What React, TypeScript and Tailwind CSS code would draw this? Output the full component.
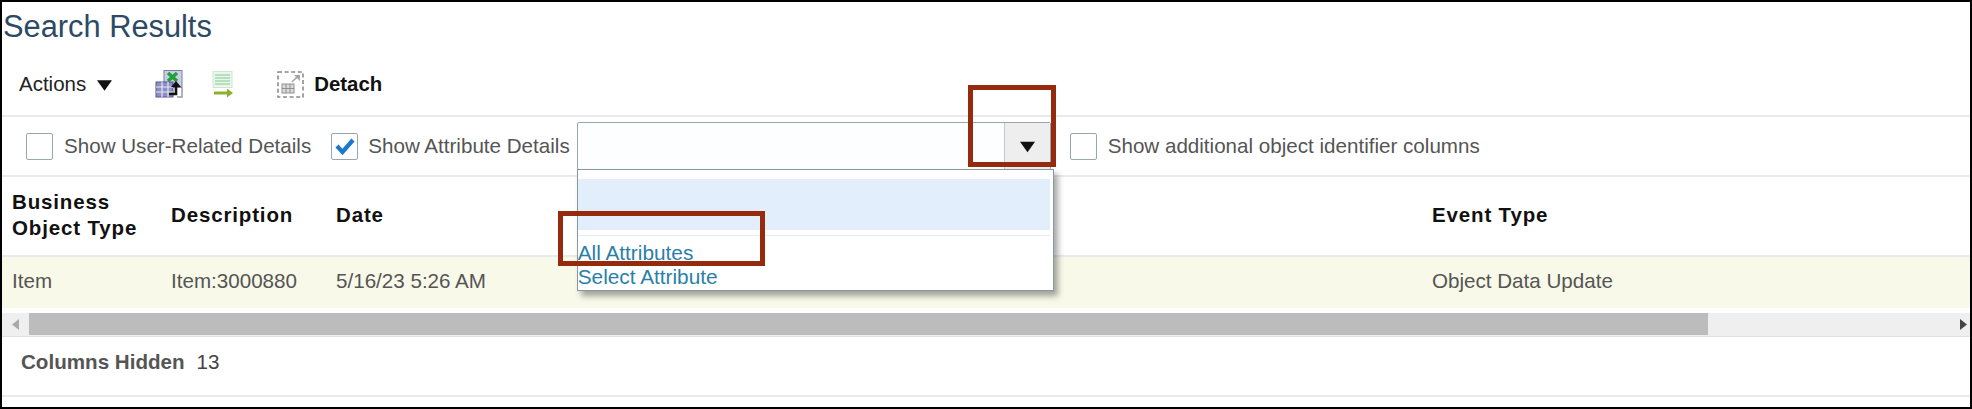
function ArrowDown({ className }: { className: string }) {
  return (
    <svg viewBox="0 0 14 10" className={className}>
      <path d="M0 0h14L7 10z" fill="#111" />
    </svg>
  );
}

function ExportIcon() {
  return (
    <svg viewBox="0 0 28 28" className="w-[28px] h-[28px]">
      <rect x="9" y="0.5" width="18" height="17" fill="#c9cfe2" stroke="#7a7fa8" />
      <path d="M13 3l9 8M22 3l-9 8" stroke="#23a03c" strokeWidth="3.5" />
      <rect x="1" y="12" width="17" height="15" fill="#8d8fc4" stroke="#54568f" />
      <path d="M1 17h17M1 22h17M7 12v15M13 12v15" stroke="#e6e7f4" strokeWidth="1.2" />
      <path d="M14 24h7v-8" fill="none" stroke="#111" strokeWidth="2.6" />
      <path d="M16 17l5-6 5 6z" fill="#111" />
      <path d="M27 18v9H22" fill="none" stroke="#9a9a9a" strokeWidth="1.5" />
    </svg>
  );
}

function ExportGreenIcon() {
  return (
    <svg viewBox="0 0 22 27" className="w-[22px] h-[27px]">
      <rect x="1" y="0.5" width="19" height="16" fill="#eaf6ec" stroke="#cfe6d3" />
      <path d="M3 4h15M3 7h15M3 10h15M3 13h15" stroke="#a4d8ae" strokeWidth="1.4" />
      <path d="M2 22h15" stroke="#8fb02e" strokeWidth="3" />
      <path d="M15 17.5l6 4.5-6 4.5z" fill="#8fb02e" />
    </svg>
  );
}

function DetachIcon() {
  return (
    <svg viewBox="0 0 27 27" className="w-[27px] h-[27px]">
      <rect x="1" y="1" width="25" height="25" fill="none" stroke="#8b8b8b" strokeWidth="1.6" strokeDasharray="4 2.6" />
      <rect x="5" y="13" width="12" height="9" fill="#dcdcdc" stroke="#8f8f8f" />
      <path d="M5 17.5h12M9 13v9M13 13v9" stroke="#8f8f8f" />
      <path d="M15 11l7-7" stroke="#a6a6a6" strokeWidth="1.6" />
      <path d="M17 4h6v6z" fill="#a6a6a6" />
    </svg>
  );
}

function Checkbox({ checked }: { checked?: boolean }) {
  return (
    <div className="w-[27px] h-[27px] shrink-0 rounded-[2px] border border-[#9aa6ae] bg-white flex items-center justify-center">
      {checked && (
        <svg viewBox="0 0 20 18" className="w-[20px] h-[18px]">
          <path d="M2 9l5.5 6L18 3" fill="none" stroke="#1b78d0" strokeWidth="4.2" />
        </svg>
      )}
    </div>
  );
}

export default function App() {
  return (
    <div className="relative w-[1972px] h-[409px] overflow-hidden border-2 border-black bg-white flex flex-col font-['Liberation_Sans',Arial,sans-serif]">
      {/* Title */}
      <div className="h-[51px] shrink-0 pl-px flex items-center">
        <h1 className="text-[30.8px] leading-none text-[#2c4a66]">Search Results</h1>
      </div>

      {/* Toolbar */}
      <div className="h-[64px] shrink-0 flex items-center pl-[17px] border-b-2 border-[#e8eaeb]">
        <span className="text-[20.5px] text-[#222]">Actions</span>
        <ArrowDown className="w-[15px] h-[11px] ml-[11px] mt-[3px]" />
        <div className="ml-[43px]">
          <ExportIcon />
        </div>
        <div className="ml-[29px]">
          <ExportGreenIcon />
        </div>
        <div className="ml-[43px]">
          <DetachIcon />
        </div>
        <span className="ml-[10px] text-[20.4px] font-bold text-[#111]">Detach</span>
      </div>

      {/* Filter row */}
      <div className="h-[60px] shrink-0 flex items-center pl-[24px] border-b-2 border-[#e8eaeb] text-[20.6px] text-[#555]">
        <Checkbox />
        <span className="ml-[11px]">Show User-Related Details</span>
        <div className="ml-[20px]">
          <Checkbox checked />
        </div>
        <span className="ml-[10px]">Show Attribute Details</span>
        <div className="relative ml-[7px] w-[474px] h-[48px] rounded-[2px] border border-[#9aa6ae] bg-[#fcfeff] flex justify-end">
          <div className="w-[46px] h-full border-l border-[#c4c9cc] bg-[#eeeeee] flex items-center justify-center">
            <ArrowDown className="w-[15px] h-[12px] mt-[2px]" />
          </div>
          {/* Dropdown list */}
          <div className="absolute z-10 left-[-1px] top-[46px] w-[477px] h-[122px] border border-[#8b979e] bg-white shadow-[4px_5px_6px_rgba(0,0,0,0.35)] text-[20.8px] leading-[24px] text-[#2a7fa8]">
            <div className="mt-[9px] mr-[3px] h-[51px] bg-[#e2eefb]" />
            <div className="mt-[5px] mr-[3px] border-t border-[#e3ecf0]" />
            <div className="mt-[5px]">All Attributes</div>
            <div>Select Attribute</div>
          </div>
        </div>
        <div className="ml-[19px]">
          <Checkbox />
        </div>
        <span className="ml-[11px]">Show additional object identifier columns</span>
      </div>

      {/* Table header */}
      <div className="h-[80px] shrink-0 grid grid-cols-[159px_165px_1096px_1fr] items-center pl-[10px] pb-[2px] border-b-2 border-[#e8eaeb] text-[20.5px] leading-[26px] tracking-[0.85px] font-bold text-[#111]">
        <div>
          Business
          <br />
          Object Type
        </div>
        <div>Description</div>
        <div>Date</div>
        <div>Event Type</div>
      </div>

      {/* Table row */}
      <div className="h-[51px] shrink-0 grid grid-cols-[159px_165px_1096px_1fr] items-center pl-[10px] pb-[2px] bg-[#f8f9e9] text-[20.6px] text-[#555]">
        <div>Item</div>
        <div>Item:3000880</div>
        <div>5/16/23 5:26 AM</div>
        <div>Object Data Update</div>
      </div>

      {/* Scrollbar */}
      <div className="mt-[5px] h-[24px] shrink-0 flex bg-[#efefef] border-b border-[#e0e0e0]">
        <div className="w-[27px] flex items-center justify-center">
          <svg viewBox="0 0 7 11" className="w-[7px] h-[11px]">
            <path d="M7 0v11L0 5.5z" fill="#a9a9a9" />
          </svg>
        </div>
        <div className="w-[1679px] h-[22px] bg-[#bcbcbc]" />
        <div className="flex-1 flex items-center justify-end pr-[3px]">
          <svg viewBox="0 0 7 11" className="w-[7px] h-[11px]">
            <path d="M0 0v11l7-5.5z" fill="#444" />
          </svg>
        </div>
      </div>

      {/* Footer */}
      <div className="h-[60px] shrink-0 flex items-center pl-[19px] pb-[8px] border-b-2 border-[#e8eaeb] text-[20.6px] text-[#555]">
        <span className="font-bold">Columns Hidden</span>
        <span className="ml-[12px] text-[#444]">13</span>
      </div>

      {/* Callout boxes */}
      <div className="absolute z-20 left-[966px] top-[83px] w-[88px] h-[82px] border-[5px] border-[#962a0c]" />
      <div className="absolute z-20 left-[556px] top-[209px] w-[207px] h-[55px] border-[5px] border-[#962a0c]" />
    </div>
  );
}
